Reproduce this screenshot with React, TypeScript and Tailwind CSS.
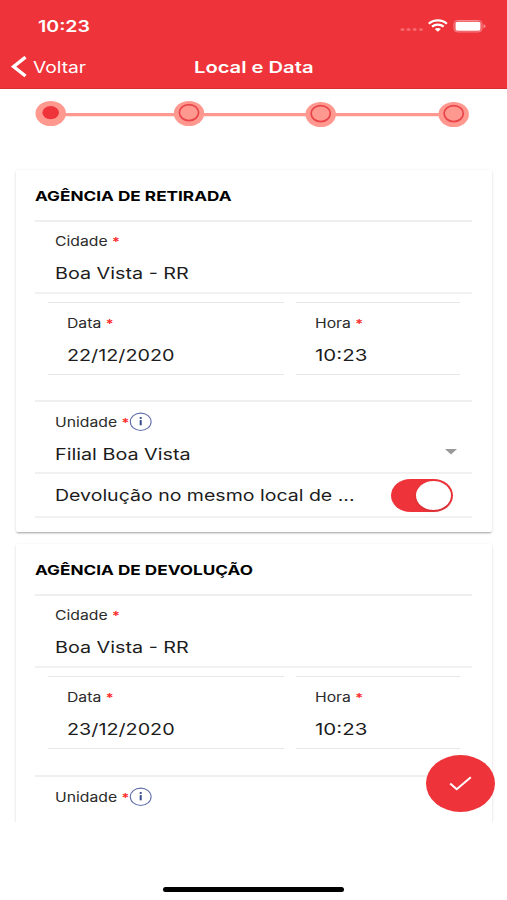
import type { ReactNode } from "react";
import clsx from "clsx";

type TextProps = {
  children: ReactNode;
  className?: string;
};

type AgencyCardProps = {
  title: string;
  city: string;
  date: string;
  time: string;
  unitClass?: string;
  children?: ReactNode;
};

// Wide text, stretched from its left edge
function Text({ children, className }: TextProps) {
  return (
    <span className={clsx("block w-max origin-left whitespace-nowrap", className)}>{children}</span>
  );
}

function Label({ children }: { children: ReactNode }) {
  return (
    <Text className="h-5 scale-x-[1.21] text-[13px] leading-5 text-[#2b2b2b]">
      {children} <span className="text-xs font-semibold text-[#fb2a2a]">*</span>
    </Text>
  );
}

function Value({ children, className = "scale-x-[1.235]" }: TextProps) {
  return <Text className={clsx("h-6 text-base leading-6 text-[#1c1c1c]", className)}>{children}</Text>;
}

function InfoIcon() {
  return (
    <svg className="h-5 w-[23px]" viewBox="0 0 23 20" fill="none">
      <ellipse cx="11.7" cy="9.800" rx="10.4" ry="8.700" stroke="#6370ab" strokeWidth="1.1" />
      <path d="M11.7 8.100v5.200" stroke="#34498c" strokeWidth="2" />
      <ellipse cx="11.7" cy="6" rx="1.200" ry="1" fill="#34498c" />
    </svg>
  );
}

function StatusBar() {
  return (
    <div className="flex h-[52px] items-center justify-between pr-[20px] pl-[38px]">
      <Text className="mt-px scale-x-[1.26] text-[15.5px] leading-6 font-semibold">10:23</Text>
      <svg className="h-3.5 w-[87px]" viewBox="0 0 87 14">
        <g fill="#f6686d">
          <ellipse cx="2.5" cy="10.5" rx="2" ry="1.6" />
          <ellipse cx="8.5" cy="10.5" rx="2" ry="1.6" />
          <ellipse cx="14.7" cy="10.5" rx="2" ry="1.6" />
          <ellipse cx="21" cy="10.5" rx="2" ry="1.6" />
        </g>
        <g fill="none" stroke="#fff" strokeWidth="2.2">
          <path d="M28.800 4.800C33.500 .2 42.200 .2 46.900 4.800" />
          <path d="M32 7.700c3.300-2.900 8.400-2.900 11.700 0" />
        </g>
        <path d="M34.800 10c1.700-1.500 4.400-1.500 6.100 0L37.850 12.700z" fill="#fff" />
        <rect x="54" y="1.500" width="28" height="11.400" rx="3.400" fill="none" stroke="#f68a8e" />
        <rect x="55.500" y="2.700" width="25" height="9" rx="1.800" fill="#fff" />
        <path d="M83.400 5.300c1.800.5 2.200 1.200 2.200 1.900s-.4 1.400-2.200 1.900z" fill="#f68a8e" />
      </svg>
    </div>
  );
}

function Header() {
  return (
    <header className="h-[89px] border-b border-[#d92e34] bg-[#ee343a] text-white">
      <StatusBar />
      <div className="flex h-[30px] items-center">
        <div className="flex w-[194px] items-center pl-[11px]">
          <svg className="mr-1.5 h-[22px] w-4" viewBox="0 0 16 22" fill="none">
            <path d="M14.500 1.200L2.500 10.600l12 9.400" stroke="#fff" strokeWidth="3.400" />
          </svg>
          <Text className="scale-x-[1.2] text-base leading-6">Voltar</Text>
        </div>
        <Text className="scale-x-[1.26] text-base leading-6 font-semibold">Local e Data</Text>
      </div>
    </header>
  );
}

const steps = [
  { x: 50.7, y: 24.5 },
  { x: 189, y: 24.5 },
  { x: 320.7, y: 25.5 },
  { x: 453.7, y: 25.5 },
];

function Stepper() {
  return (
    <svg className="block h-[81px] w-full shrink-0" viewBox="0 0 507 81">
      <path d="M50 25.700H454" stroke="#ff998f" strokeWidth="3.200" />
      {steps.map((step, i) => (
        <g key={step.x}>
          <ellipse cx={step.x} cy={step.y} rx="15.200" ry="12.600" fill="#ff998f" />
          {i === 0 ? (
            <ellipse cx={step.x} cy={step.y - 0.9} rx="8.300" ry="6.600" fill="#ee343a" />
          ) : (
            <ellipse cx={step.x} cy={step.y - 0.9} rx="9.600" ry="8" fill="none" stroke="#e9444a" strokeWidth="1.700" />
          )}
        </g>
      ))}
    </svg>
  );
}

function AgencyCard({ title, city, date, time, unitClass = "mt-[26px]", children }: AgencyCardProps) {
  return (
    <section className="mr-[15px] ml-4 h-[362px] shrink-0 rounded-[2px] bg-white pr-5 pl-[19px] shadow-[0_1px_3px_rgba(0,0,0,0.14),0_2px_2px_-1px_rgba(0,0,0,0.26)]">
      <h2 className="flex h-[52px] items-center border-b-2 border-[#efefef] pt-px">
        <Text className="scale-x-[1.255] text-[13.7px] leading-5 font-bold text-black">{title}</Text>
      </h2>

      <div className="h-[72px] border-b-2 border-[#f1f1f1] pt-[9px] pl-5">
        <Label>Cidade</Label>
        <div className="mt-2.5">
          <Value>{city}</Value>
        </div>
      </div>

      <div className="mt-2 mr-3 ml-[13px] flex h-[73px] gap-3">
        <div className="w-[236px] border-y border-[#e8e8e8] pt-[10px] pl-[19px]">
          <Label>Data</Label>
          <div className="mt-2.5">
            <Value>{date}</Value>
          </div>
        </div>
        <div className="flex-1 border-y border-[#e8e8e8] pt-[10px] pl-[19px]">
          <Label>Hora</Label>
          <div className="mt-2.5">
            <Value className="scale-x-[1.28]">{time}</Value>
          </div>
        </div>
      </div>

      <div className={clsx("h-[72px] border-t-2 border-[#efefef] pt-[10px] pl-5", unitClass)}>
        <div className="flex items-center">
          <div className="w-[74px]">
            <Label>Unidade</Label>
          </div>
          <InfoIcon />
        </div>
        {children}
      </div>
    </section>
  );
}

function SameLocationRow() {
  return (
    <div className="-ml-5 flex h-[46px] items-start justify-between border-y-2 border-[#f1f1f1] pt-[5px] pr-[19px] pl-5">
      <Value className="mt-1 scale-x-[1.22]">Devolução no mesmo local de ...</Value>
      <button className="flex h-[33px] w-[62px] items-center justify-end rounded-[20px/17px] bg-[#ee343a] pr-0.5">
        <span className="h-[29px] w-[35px] rounded-[50%] bg-white shadow-[0_1px_3px_rgba(0,0,0,0.15)]" />
      </button>
    </div>
  );
}

export default function App() {
  return (
    <div className="relative flex h-[900px] w-[507px] flex-col overflow-hidden bg-white font-['Inter','Liberation_Sans',sans-serif]">
      <Header />

      <main className="flex h-[733px] flex-col overflow-hidden">
        <Stepper />
        <AgencyCard
          title="AGÊNCIA DE RETIRADA"
          city="Boa Vista - RR"
          date="22/12/2020"
          time="10:23"
          unitClass="mt-[25px]"
        >
          <div className="mt-2.5 flex h-[30px] items-start justify-between pr-[15px]">
            <Value>Filial Boa Vista</Value>
            <svg className="mt-[7px] h-1.5 w-3" viewBox="0 0 12 6">
              <path d="M0 0h12L6 5.500z" fill="#999" />
            </svg>
          </div>
          <SameLocationRow />
        </AgencyCard>
        <div className="h-3 shrink-0" />
        <AgencyCard title="AGÊNCIA DE DEVOLUÇÃO" city="Boa Vista - RR" date="23/12/2020" time="10:23" />
      </main>

      <button className="absolute top-[755px] left-[426px] flex h-[57px] w-[69px] items-center justify-center rounded-[50%] bg-[#ee343a]">
        <svg className="h-[15px] w-[23px]" viewBox="0 0 23 15" fill="none">
          <path d="M1.200 7.500l6.500 5.700L21.800 1.200" stroke="#fff" strokeWidth="2" />
        </svg>
      </button>

      <div className="mx-auto mt-[65px] h-[5px] w-[181px] rounded-full bg-black" />
    </div>
  );
}
